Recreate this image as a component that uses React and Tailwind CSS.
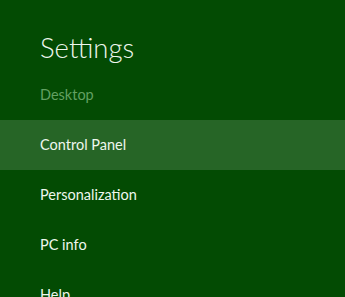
export default function App() {
  const items = ['Control Panel', 'Personalization', 'PC info', 'Help'];

  return (
    <div
      className="w-[345px] h-[297px] overflow-hidden bg-[#034b03] text-[#eef7ee]"
      style={{ fontFamily: 'Lato, "Open Sans", sans-serif' }}
    >
      {/* Header */}
      <div className="h-[70px] pl-10 pt-[31px]">
        <h1 className="text-[27.5px] leading-[34px] font-light">Settings</h1>
      </div>
      <div className="h-[50px] pl-10 flex items-center">
        <span className="text-[14.5px] text-[#62a062]">Desktop</span>
      </div>

      {/* Menu */}
      {items.map((label, i) => (
        <div
          key={label}
          className={`h-[50px] pl-10 flex items-center ${i === 0 ? 'bg-[#266526]' : ''}`}
        >
          <span className="text-[14.5px]">{label}</span>
        </div>
      ))}
    </div>
  );
}
